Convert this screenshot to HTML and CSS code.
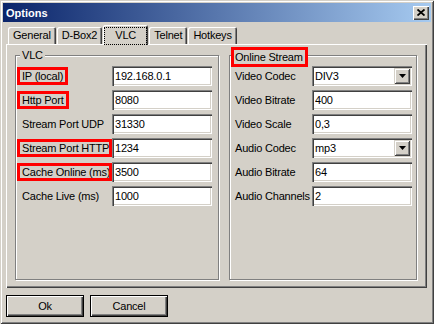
FILE: index.html
```html
<!DOCTYPE html>
<html>

<head>
	<link rel="stylesheet" href="styles.css">
</head>

<body>
	<div class="window">
		<div class="titlebar">
			<span class="title">Options</span>
			<div class="close">
				<svg width="8" height="7" viewBox="0 0 8 7"><path d="M0.5 0.5 L7.5 6.5 M7.5 0.5 L0.5 6.5" stroke="#000" stroke-width="1.8" fill="none" /></svg>
			</div>
		</div>

		<div class="tabs">
			<div class="tab">General</div>
			<div class="tab">D-Box2</div>
			<div class="tab active"><span class="focus">VLC</span></div>
			<div class="tab">Telnet</div>
			<div class="tab">Hotkeys</div>
		</div>

		<div class="panel">
			<div class="group vlc">
				<div class="legend">VLC</div>
				<div class="rows">
					<span class="label"><span class="mark">IP (local)</span></span>
					<input class="field" value="192.168.0.1" />
					<span class="label"><span class="mark">Http Port</span></span>
					<input class="field" value="8080" />
					<span class="label">Stream Port UDP</span>
					<input class="field" value="31330" />
					<span class="label"><span class="mark">Stream Port HTTP</span></span>
					<input class="field" value="1234" />
					<span class="label"><span class="mark">Cache Online (ms)</span></span>
					<input class="field" value="3500" />
					<span class="label">Cache Live (ms)</span>
					<input class="field" value="1000" />
				</div>
			</div>

			<div class="group stream">
				<div class="legend marked"><span class="mark">Online Stream</span></div>
				<div class="rows">
					<span class="label">Video Codec</span>
					<div class="field combo"><span class="value">DIV3</span><span class="drop"><svg width="7" height="4" viewBox="0 0 7 4"><path d="M0 0 H7 L3.5 4 Z" fill="#000" /></svg></span></div>
					<span class="label">Video Bitrate</span>
					<input class="field" value="400" />
					<span class="label">Video Scale</span>
					<input class="field" value="0,3" />
					<span class="label">Audio Codec</span>
					<div class="field combo"><span class="value">mp3</span><span class="drop"><svg width="7" height="4" viewBox="0 0 7 4"><path d="M0 0 H7 L3.5 4 Z" fill="#000" /></svg></span></div>
					<span class="label">Audio Bitrate</span>
					<input class="field" value="64" />
					<span class="label">Audio Channels</span>
					<input class="field" value="2" />
				</div>
			</div>
		</div>

		<div class="buttons">
			<button class="btn">Ok</button>
			<button class="btn">Cancel</button>
		</div>
	</div>
</body>

</html>
```

FILE: styles.css
```css
body {
	margin: 0;
	background-color: #d4d0c8;
	font-family: "Liberation Sans", Arial, sans-serif;
	font-size: 11px;
	letter-spacing: -0.2px;
	color: #000;
}

.window {
	width: 434px;
	height: 324px;
	box-sizing: border-box;
	padding: 3px;
	background-color: #d4d0c8;
	box-shadow: inset 1px 1px #d4d0c8, inset -1px -1px #404040, inset 2px 2px #fff, inset -2px -2px #808080;
}

.titlebar {
	height: 19px;
	display: flex;
	align-items: center;
	justify-content: space-between;
	padding: 0 2px 0 3px;
	background: linear-gradient(to right, #0a246a, #a6caf0);
	color: #fff;
	font-weight: bold;
	letter-spacing: 0;
}

.close {
	width: 16px;
	height: 14px;
	display: flex;
	align-items: center;
	justify-content: center;
	background-color: #d4d0c8;
	box-shadow: inset 1px 1px #fff, inset -1px -1px #404040, inset -2px -2px #808080;
}

.tabs {
	display: flex;
	align-items: flex-end;
	margin: 3px 0 0 5px;
}

.tab {
	height: 17px;
	box-sizing: border-box;
	margin-right: 1px;
	padding: 0 5px 1px;
	display: flex;
	align-items: center;
	justify-content: center;
	background-color: #d4d0c8;
	border-radius: 2px 2px 0 0;
	box-shadow: inset 1px 1px #fff, inset -1px 0 #404040, inset -2px 0 #808080;
}

.tab.active {
	position: relative;
	z-index: 1;
	width: 45px;
	height: 20px;
	margin-bottom: -1px;
	padding: 3px 2px 1px;
}

.focus {
	flex: 1;
	align-self: stretch;
	display: flex;
	align-items: center;
	justify-content: center;
	padding-bottom: 2px;
	outline: 1px dotted #000;
}

.panel {
	width: 421px;
	height: 244px;
	box-sizing: border-box;
	margin-left: 3px;
	padding: 11px 0 0 9px;
	display: flex;
	gap: 10px;
	box-shadow: inset 1px 1px #fff, inset -1px -1px #404040, inset -2px -2px #808080;
}

.group {
	position: relative;
	height: 225px;
	box-sizing: border-box;
	padding: 10px 0 0 6px;
	border: 1px solid #808080;
	box-shadow: inset 1px 1px #fff, 1px 1px #fff;
}

.group.vlc {
	width: 204px;
}

.group.stream {
	width: 188px;
	padding-left: 5px;
}

.legend {
	position: absolute;
	top: -7px;
	left: 4px;
	padding: 0 2px;
	line-height: 13px;
	background-color: #d4d0c8;
}

.legend.marked {
	top: -9px;
	left: 1px;
	padding: 0;
}

.legend.marked .mark {
	margin: 0;
	padding: 0 2px 0 1px;
	line-height: 14px;
}

.rows {
	display: grid;
	grid-template-columns: 90px 100px;
	grid-auto-rows: 20px;
	row-gap: 4px;
	align-items: center;
}

.stream .rows {
	grid-template-columns: 77px 100px;
}

.label {
	white-space: nowrap;
}

.mark {
	display: inline-block;
	vertical-align: middle;
	max-width: 95px;
	box-sizing: border-box;
	overflow: hidden;
	border: 3px solid #f00;
	padding: 0 2px;
	margin: 0 -5px;
	line-height: 12px;
}

.field {
	width: 100px;
	height: 20px;
	box-sizing: border-box;
	margin: 0;
	padding: 0 3px;
	border: none;
	outline: none;
	background-color: #fff;
	font: inherit;
	letter-spacing: inherit;
	color: #000;
	box-shadow: inset 1px 1px #808080, inset 2px 2px #404040, inset -1px -1px #fff, inset -2px -2px #d4d0c8;
}

.combo {
	display: flex;
	align-items: center;
	padding-right: 2px;
}

.combo .value {
	flex: 1;
}

.drop {
	width: 16px;
	height: 16px;
	display: flex;
	align-items: center;
	justify-content: center;
	background-color: #d4d0c8;
	box-shadow: inset 1px 1px #d4d0c8, inset -1px -1px #404040, inset 2px 2px #fff, inset -2px -2px #808080;
}

.buttons {
	display: flex;
	gap: 6px;
	margin: 7px 0 0 3px;
}

.btn {
	width: 78px;
	height: 22px;
	padding: 0;
	border: 1px solid #000;
	background-color: #d4d0c8;
	font: inherit;
	letter-spacing: inherit;
	color: #000;
	box-shadow: inset 1px 1px #fff, inset -1px -1px #404040, inset -2px -2px #808080;
}
```
